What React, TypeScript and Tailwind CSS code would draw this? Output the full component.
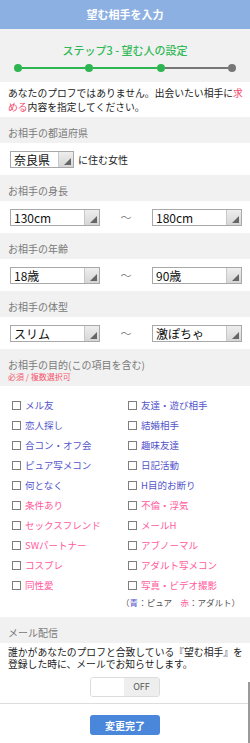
import React from 'react';

const BLUE = 'text-[#5454cc]';
const PINK = 'text-[#ff5a9c]';

const purposes: [string, boolean][] = [
  ['メル友', false],
  ['友達・遊び相手', false],
  ['恋人探し', false],
  ['結婚相手', false],
  ['合コン・オフ会', false],
  ['趣味友達', false],
  ['ピュア写メコン', false],
  ['日記活動', false],
  ['何となく', false],
  ['H目的お断り', false],
  ['条件あり', true],
  ['不倫・浮気', true],
  ['セックスフレンド', true],
  ['メールH', true],
  ['SWパートナー', true],
  ['アブノーマル', true],
  ['コスプレ', true],
  ['アダルト写メコン', true],
  ['同性愛', true],
  ['写真・ビデオ撮影', true],
];

function SelectBox({ value, width }: { value: string; width: string }) {
  return (
    <div className={`${width} h-[17px] flex border border-[#a8a8a8] bg-white`}>
      <div className="flex-1 pl-[3px] text-[12px] leading-[15px] text-[#111]">{value}</div>
      <div className="w-[15px] border-l border-[#c8c8c8] bg-gradient-to-b from-[#eeeeee] to-[#d6d6d6] flex items-end justify-end p-[2px]">
        <svg width="7" height="7" viewBox="0 0 7 7">
          <polygon points="7,0 7,7 0,7" fill="#666" />
        </svg>
      </div>
    </div>
  );
}

function SectionHead({ children }: { children: React.ReactNode }) {
  return (
    <div className="bg-[#f1f1f1] h-[26px] pt-[10px] pl-[8px] text-[10px] leading-[12px] text-[#7a7a7a]">
      {children}
    </div>
  );
}

function RangeRow({ from, to }: { from: string; to: string }) {
  return (
    <div className="h-[32px] flex items-center pl-[10px] pr-[8px]">
      <SelectBox value={from} width="w-[90px]" />
      <div className="flex-1 text-center text-[11px] text-[#888]">～</div>
      <SelectBox value={to} width="w-[90px]" />
    </div>
  );
}

export default function App() {
  return (
    <div className="relative w-[250px] h-[743px] overflow-hidden bg-white font-['Noto_Sans_CJK_JP',sans-serif]">
      <div className="h-[29px] bg-[#8cb0e2] flex items-center justify-center text-white text-[11px] font-bold">
        望む相手を入力
      </div>

      <div className="h-[53px] bg-[#f1f1f1] pt-[13px]">
        <div className="text-center text-[11px] leading-[16px] font-medium text-[#30b956]">
          ステップ3 - 望む人の設定
        </div>
        <div className="mt-[6px] px-[14px] flex items-center">
          <span className="w-[8px] h-[8px] rounded-full bg-[#2db552]" />
          <span className="flex-1 h-[2px] bg-[#2db552]" />
          <span className="w-[8px] h-[8px] rounded-full bg-[#2db552]" />
          <span className="flex-1 h-[2px] bg-[#2db552]" />
          <span className="w-[8px] h-[8px] rounded-full bg-[#2db552]" />
          <span className="flex-1 h-[2px] bg-[#777]" />
          <span className="w-[8px] h-[8px] rounded-full bg-[#777]" />
        </div>
      </div>

      <div className="h-[35px] pt-[4px] pl-[8px] pr-[4px] text-[9.8px] leading-[14px] text-[#222]">
        <div>
          あなたのプロフではありません。出会いたい相手に<span className="text-[#f5436b]">求</span>
        </div>
        <div>
          <span className="text-[#f5436b]">める</span>内容を指定してください。
        </div>
      </div>

      <SectionHead>お相手の都道府県</SectionHead>
      <div className="h-[32px] flex items-center pl-[10px] gap-[4px]">
        <SelectBox value="奈良県" width="w-[64px]" />
        <span className="text-[10px] text-[#222]">に住む女性</span>
      </div>

      <SectionHead>お相手の身長</SectionHead>
      <RangeRow from="130cm" to="180cm" />

      <SectionHead>お相手の年齢</SectionHead>
      <RangeRow from="18歳" to="90歳" />

      <SectionHead>お相手の体型</SectionHead>
      <RangeRow from="スリム" to="激ぽちゃ" />

      <div className="bg-[#f1f1f1] h-[37px] pt-[10px] pl-[8px] text-[10px] leading-[12px] text-[#7a7a7a]">
        <div>お相手の目的(この項目を含む)</div>
        <div className="text-[8px] text-[#f5576f]">必須 / 複数選択可</div>
      </div>

      <div className="pt-[9px] pl-[12px] grid grid-cols-[116px_1fr]">
        {purposes.map(([label, adult]) => (
          <div key={label} className="h-[20px] flex items-center gap-[4px]">
            <span className="w-[9px] h-[9px] border border-[#7d7d7d] bg-white" />
            <span className={`text-[9.5px] ${adult ? PINK : BLUE}`}>{label}</span>
          </div>
        ))}
      </div>
      <div className="h-[22px] pr-[10px] text-right text-[8.5px] leading-[14px] text-[#555]">
        （<span className={BLUE}>青</span>：ピュア　<span className={PINK}>赤</span>：アダルト）
      </div>

      <SectionHead>メール配信</SectionHead>
      <div className="pt-[3px] pl-[8px] pr-[4px] text-[9.8px] leading-[12px] text-[#222]">
        誰かがあなたのプロフと合致している『望む相手』を登録した時に、メールでお知らせします。
      </div>
      <div className="mt-[7px] flex justify-center">
        <div className="w-[70px] h-[20px] flex rounded-[3px] border border-[#dcdcdc] overflow-hidden">
          <div className="w-[33px] bg-white" />
          <div className="flex-1 bg-[#eeeeee] flex items-center justify-center text-[9px] text-[#555]">OFF</div>
        </div>
      </div>
      <div className="mt-[6px] border-b border-[#dddddd]" />
      <div className="pt-[11px] flex justify-center">
        <div className="w-[70px] h-[20px] rounded-[3px] bg-[#4a86d9] flex items-center justify-center text-white text-[10px] font-bold">
          変更完了
        </div>
      </div>

      <div className="absolute right-0 top-[682px] bottom-0 w-[2px] bg-[#9a9a9a]" />
    </div>
  );
}
